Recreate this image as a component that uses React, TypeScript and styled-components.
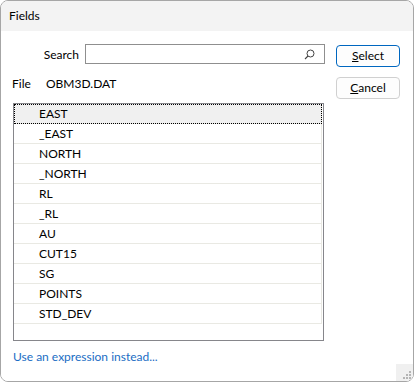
import React, { useState } from "react";
import styled, { createGlobalStyle } from "styled-components";

const GlobalStyle = createGlobalStyle`
    html, body {
        margin: 0;
        padding: 0;
        background: #ffffff;
    }
    * {
        box-sizing: border-box;
    }
`;

const FONT = `"Segoe UI", Lato, "Noto Sans", sans-serif`;

const fields = [
    "EAST",
    "_EAST",
    "NORTH",
    "_NORTH",
    "RL",
    "_RL",
    "AU",
    "CUT15",
    "SG",
    "POINTS",
    "STD_DEV",
];

const Window = styled.div`
    width: 414px;
    height: 382px;
    border: 1px solid #a6a6a6;
    border-radius: 8px;
    overflow: hidden;
    display: flex;
    flex-direction: column;
    font-family: ${FONT};
    font-size: 12px;
    color: #000;
`;

const TitleBar = styled.div`
    height: 30px;
    line-height: 30px;
    padding-left: 8px;
    background: #f3f3f3;
    font-size: 12px;
`;

const Body = styled.div`
    position: relative;
    flex: 1;
    background: #ffffff;
    display: grid;
    grid-template-columns: 313px 64px;
    column-gap: 11px;
    padding: 13px 13px 0 11px;
    align-items: start;
`;

const MainColumn = styled.div`
    display: flex;
    flex-direction: column;
`;

const SearchRow = styled.div`
    display: grid;
    grid-template-columns: 67px 1fr;
    column-gap: 6px;
    align-items: center;
    height: 20px;
`;

const Label = styled.label`
    text-align: right;
`;

const SearchBox = styled.div`
    height: 20px;
    border: 1px solid #8f8f8f;
    display: flex;
    align-items: center;
    justify-content: flex-end;
    padding-right: 9px;
`;

const SearchInput = styled.input`
    flex: 1;
    border: none;
    outline: none;
    height: 100%;
    font: inherit;
    background: transparent;
    padding: 0 4px;
`;

const FileRow = styled.div`
    display: flex;
    height: 16px;
    line-height: 16px;
    margin-top: 12px;
`;

const FileLabel = styled.span`
    width: 34px;
`;

const ListBox = styled.div`
    margin-top: 11px;
    margin-left: 1px;
    width: 311px;
    height: 238px;
    border: 1px solid #86868b;
    overflow: hidden;
`;

const Row = styled.div<{ $focused?: boolean }>`
    width: 308px;
    height: 20px;
    line-height: 19px;
    padding-left: 25px;
    border-bottom: 1px solid #e9e9e3;
    border-right: 1px solid #e9e9e3;
    background: ${(p) => (p.$focused ? "#f0f0f0" : "transparent")};
    outline: ${(p) => (p.$focused ? "1px dotted #000" : "none")};
    outline-offset: -1px;
    cursor: default;
`;

const Link = styled.a`
    margin-top: 8px;
    padding-left: 1px;
    line-height: 16px;
    color: #1a6dc4;
    text-decoration: none;
    cursor: pointer;
`;

const ButtonColumn = styled.div`
    display: flex;
    flex-direction: column;
    gap: 10px;
    padding-top: 1px;
`;

const Button = styled.button<{ $primary?: boolean }>`
    width: 64px;
    height: 22px;
    border-radius: 4px;
    border: 1px solid ${(p) => (p.$primary ? "#0067c0" : "#d0d0d0")};
    box-shadow: ${(p) => (p.$primary ? "inset 0 0 0 1px #ffffff" : "none")};
    background: #fdfdfd;
    font-family: ${FONT};
    font-size: 12px;
    color: #000;
    padding: 0;
    line-height: 18px;
`;

const Grip = styled.div`
    position: absolute;
    right: 0;
    bottom: 0;
    width: 17px;
    height: 17px;
    background: #f0f0f0;
    display: flex;
    align-items: flex-end;
    justify-content: flex-end;
    padding: 0 2px 2px 0;
`;

const SearchIcon = () => (
    <svg width="11" height="11" viewBox="0 0 11 11">
        <circle cx="6.5" cy="4.5" r="3.5" fill="none" stroke="#444" strokeWidth="1" />
        <line x1="4" y1="7" x2="1" y2="10" stroke="#444" strokeWidth="1.1" />
    </svg>
);

const GripDots = () => (
    <svg width="9" height="9" viewBox="0 0 9 9">
        <rect x="7" y="1" width="2" height="2" fill="#b4b4b4" />
        <rect x="4" y="4" width="2" height="2" fill="#b4b4b4" />
        <rect x="7" y="4" width="2" height="2" fill="#b4b4b4" />
        <rect x="1" y="7" width="2" height="2" fill="#b4b4b4" />
        <rect x="4" y="7" width="2" height="2" fill="#b4b4b4" />
        <rect x="7" y="7" width="2" height="2" fill="#b4b4b4" />
    </svg>
);

const App = () => {
    const [search, setSearch] = useState("");
    const [focused, setFocused] = useState(0);

    return (
        <>
            <GlobalStyle />
            <Window>
                <TitleBar>Fields</TitleBar>
                <Body>
                    <MainColumn>
                        <SearchRow>
                            <Label>Search</Label>
                            <SearchBox>
                                <SearchInput
                                    value={search}
                                    onChange={(e) => setSearch(e.target.value)}
                                />
                                <SearchIcon />
                            </SearchBox>
                        </SearchRow>
                        <FileRow>
                            <FileLabel>File</FileLabel>
                            <span>OBM3D.DAT</span>
                        </FileRow>
                        <ListBox>
                            {fields
                                .filter((f) =>
                                    f.toLowerCase().includes(search.toLowerCase())
                                )
                                .map((f, i) => (
                                    <Row
                                        key={f}
                                        $focused={i === focused}
                                        onClick={() => setFocused(i)}
                                    >
                                        {f}
                                    </Row>
                                ))}
                        </ListBox>
                        <Link>Use an expression instead...</Link>
                    </MainColumn>
                    <ButtonColumn>
                        <Button $primary>
                            <u>S</u>elect
                        </Button>
                        <Button>
                            <u>C</u>ancel
                        </Button>
                    </ButtonColumn>
                    <Grip>
                        <GripDots />
                    </Grip>
                </Body>
            </Window>
        </>
    );
};

export default App;
